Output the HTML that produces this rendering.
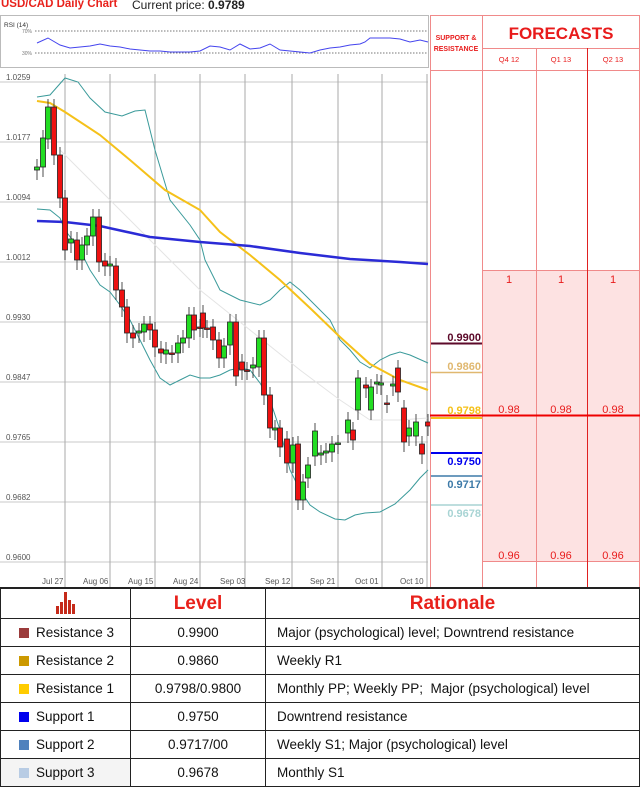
<!DOCTYPE html>
<html><head><meta charset="utf-8"><style>
body{margin:0;width:640px;height:785px;background:#fff;font-family:"Liberation Sans",sans-serif;position:relative;overflow:hidden}
.t{position:absolute;white-space:nowrap}
table{position:absolute;left:0;top:588px;width:640px;border-collapse:collapse;font-size:13.5px;color:#111}
td{border:1px solid #222;padding:0;height:27px}
.sq{display:inline-block;width:10px;height:10px;margin:0 7px 0 18px;vertical-align:-1px}
</style></head><body>
<div class="t" style="left:1px;top:-2px;font-size:11.5px;color:#e8211b;font-weight:bold">USD/CAD Daily Chart</div>
<div class="t" style="left:132px;top:-2px;font-size:12px;color:#222">Current price: <b>0.9789</b></div>
<svg width="640" height="588" style="position:absolute;left:0;top:0">
<rect x="0.5" y="15.5" width="428" height="52" fill="#fff" stroke="#bbb"/>
<text x="4" y="27" font-size="6.5" fill="#333" font-family="Liberation Sans">RSI (14)</text>
<text x="22" y="33" font-size="5" fill="#777">70%</text><text x="22" y="55" font-size="5" fill="#777">30%</text>
<line x1="35" y1="31" x2="428" y2="31" stroke="#777" stroke-dasharray="1.5,1.5"/>
<line x1="35" y1="53" x2="428" y2="53" stroke="#777" stroke-dasharray="1.5,1.5"/>
<polyline fill="none" stroke="#4444ee" stroke-width="1" points="37,43 48,38 60,45 70,48 80,47 90,46 100,44 110,46 120,47 130,49 140,50 150,51 160,51 170,52 180,52 190,52 200,51 210,46 220,47 230,50 240,44 250,49 260,48 270,44 280,50 290,51 300,52 310,53 320,50 330,48 340,47 350,45 360,44 365,42 370,38 380,38 390,38 400,39 410,42 420,40 428,42"/>
<g stroke="#c8c8c8" stroke-width="1">
<line x1="0" y1="82" x2="428" y2="82"/><line x1="0" y1="142" x2="428" y2="142"/><line x1="0" y1="202" x2="428" y2="202"/><line x1="0" y1="262" x2="428" y2="262"/><line x1="0" y1="322" x2="428" y2="322"/><line x1="0" y1="382" x2="428" y2="382"/><line x1="0" y1="442" x2="428" y2="442"/><line x1="0" y1="502" x2="428" y2="502"/><line x1="0" y1="562" x2="428" y2="562"/>
</g>
<g stroke="#aaa" stroke-width="1">
<line x1="65" y1="74" x2="65" y2="588"/><line x1="110" y1="74" x2="110" y2="588"/><line x1="155" y1="74" x2="155" y2="588"/><line x1="200" y1="74" x2="200" y2="588"/><line x1="245" y1="74" x2="245" y2="588"/><line x1="292" y1="74" x2="292" y2="588"/><line x1="338" y1="74" x2="338" y2="588"/><line x1="382" y1="74" x2="382" y2="588"/><line x1="427" y1="74" x2="427" y2="588"/>
</g>
<g font-size="8" fill="#555" font-family="Liberation Sans">
<text x="6" y="80">1.0259</text><text x="6" y="140">1.0177</text><text x="6" y="200">1.0094</text><text x="6" y="260">1.0012</text><text x="6" y="320">0.9930</text><text x="6" y="380">0.9847</text><text x="6" y="440">0.9765</text><text x="6" y="500">0.9682</text><text x="6" y="560">0.9600</text>
<text x="42" y="584">Jul 27</text><text x="83" y="584">Aug 06</text><text x="128" y="584">Aug 15</text><text x="173" y="584">Aug 24</text><text x="220" y="584">Sep 03</text><text x="265" y="584">Sep 12</text><text x="310" y="584">Sep 21</text><text x="355" y="584">Oct 01</text><text x="400" y="584">Oct 10</text>
</g>
<polyline fill="none" stroke="#e4e4e4" stroke-width="1" points="60,150 80,170 110,200 150,240 200,290 250,330 300,370 340,400 370,420 400,420 428,418"/>
<polyline fill="none" stroke="#3a9a9a" stroke-width="1" points="37,97 50,95 65,78 78,82 90,98 105,112 122,116 135,111 145,110 155,150 170,200 190,225 200,240 205,260 220,290 240,300 260,305 270,300 280,290 290,282 300,290 310,300 330,320 340,340 350,350 360,362 370,368 380,360 390,355 400,352 410,355 428,363"/>
<polyline fill="none" stroke="#3a9a9a" stroke-width="1" points="37,209 50,210 60,218 65,230 80,250 90,270 100,285 110,292 120,305 130,320 140,340 150,360 160,378 170,385 180,380 190,375 200,378 210,378 220,375 230,370 240,368 250,370 260,383 270,400 280,430 290,470 300,490 310,505 320,512 335,519 345,520 355,515 365,513 380,512 395,504 410,490 420,478 428,470"/>
<polyline fill="none" stroke="#f5c11a" stroke-width="2" points="37,101 50,103 65,112 100,135 130,160 165,190 200,210 220,232 250,255 280,280 310,308 340,337 370,364 400,380 428,390"/>
<polyline fill="none" stroke="#2b2bd6" stroke-width="2.5" points="37,221 65,222 100,226 150,237 200,242 250,246 300,253 350,259 400,262 428,264"/>
<g id="c" stroke="#222" stroke-width="0.8"></g>
<rect x="483" y="270" width="157" height="291" fill="#fde2e2"/>
<g stroke="#f08a8a" stroke-width="1">
<line x1="430.5" y1="15" x2="430.5" y2="588"/><line x1="482.5" y1="15" x2="482.5" y2="588"/><line x1="536.5" y1="48" x2="536.5" y2="588"/><line x1="639.5" y1="15" x2="639.5" y2="588"/>
<line x1="430" y1="15.5" x2="640" y2="15.5"/><line x1="483" y1="48.5" x2="640" y2="48.5"/><line x1="430" y1="70.5" x2="640" y2="70.5"/><line x1="483" y1="270.5" x2="640" y2="270.5"/><line x1="483" y1="561.5" x2="640" y2="561.5"/>
</g>
<line x1="587.5" y1="48" x2="587.5" y2="588" stroke="#e02020"/>
<line x1="430" y1="415.5" x2="640" y2="415.5" stroke="#ee0000" stroke-width="2"/>
<g font-family="Liberation Sans" fill="#e81b1b">
<text x="561" y="39" font-size="17" font-weight="bold" text-anchor="middle">FORECASTS</text>
<text x="456" y="40" font-size="7" font-weight="bold" text-anchor="middle">SUPPORT &amp;</text>
<text x="456" y="51" font-size="7" font-weight="bold" text-anchor="middle">RESISTANCE</text>
<text x="509" y="62" font-size="7.5" text-anchor="middle">Q4 12</text><text x="561" y="62" font-size="7.5" text-anchor="middle">Q1 13</text><text x="613" y="62" font-size="7.5" text-anchor="middle">Q2 13</text>
<g font-size="11" text-anchor="middle"><text x="509" y="283">1</text><text x="561" y="283">1</text><text x="613" y="283">1</text>
<text x="509" y="413">0.98</text><text x="561" y="413">0.98</text><text x="613" y="413">0.98</text>
<text x="509" y="559">0.96</text><text x="561" y="559">0.96</text><text x="613" y="559">0.96</text></g>
</g>
<line x1="431" y1="343.5" x2="482" y2="343.5" stroke="#5c0a2a" stroke-width="2"/>
<line x1="431" y1="372.5" x2="482" y2="372.5" stroke="#e0b870" stroke-width="1.5"/>
<line x1="431" y1="418" x2="482" y2="418" stroke="#f5c11a" stroke-width="2"/>
<line x1="431" y1="453" x2="482" y2="453" stroke="#0000ee" stroke-width="2"/>
<line x1="431" y1="476" x2="482" y2="476" stroke="#3d7aa8" stroke-width="1.5"/>
<line x1="431" y1="505" x2="482" y2="505" stroke="#a8d4d4" stroke-width="1.5"/>
<g font-family="Liberation Sans" font-size="11" font-weight="bold" text-anchor="end">
<text x="481" y="341" fill="#5c0a2a">0.9900</text>
<text x="481" y="370" fill="#e0b870">0.9860</text>
<text x="481" y="414" fill="#f5c11a">0.9798</text>
<text x="481" y="465" fill="#0000ee">0.9750</text>
<text x="481" y="488" fill="#3d7aa8">0.9717</text>
<text x="481" y="517" fill="#a8d4d4">0.9678</text>
</g>
<line x1="0" y1="587.5" x2="640" y2="587.5" stroke="#222"/>
</svg>
<script>
var d=[[37,170,167],[43,167,138],[48,139,107],[54,107,155],[60,155,198],[65,198,250],[71,243,239],[77,240,260],[82,260,245],[87,245,236],[93,236,217],[99,217,262],[105,261,266],[110,266,264],[116,266,290],[122,290,307],[127,307,333],[133,333,338],[139,333,331],[144,332,324],[150,324,330],[155,330,347],[161,349,353],[166,354,350],[172,353,353],[178,353,343],[183,343,338],[189,338,315],[194,315,330],[200,327,327],[203,313,328],[207,328,328],[213,327,340],[219,340,358],[224,358,346],[230,345,322],[236,322,376],[242,362,370],[247,370,370],[253,368,365],[259,367,338],[264,338,395],[270,395,428],[275,430,428],[280,428,447],[287,439,463],[293,463,445],[298,444,500],[303,500,482],[308,478,465],[315,456,431],[321,455,453],[326,453,451],[332,452,444],[338,444,443],[348,433,420],[353,430,440],[358,410,378],[366,385,388],[371,410,387],[377,384,382],[381,385,383],[387,403,403],[393,386,384],[398,368,392],[404,408,442],[409,436,428],[416,436,422],[422,444,454],[428,422,426]];
var s='';d.forEach(function(c){var x=c[0],o=c[1],cl=c[2],t=Math.min(o,cl),b=Math.max(o,cl),h=Math.max(b-t,1.5);
s+='<line x1="'+x+'" y1="'+(t-8)+'" x2="'+x+'" y2="'+(b+10)+'"/>';
s+='<rect x="'+(x-2.5)+'" y="'+t+'" width="5" height="'+h+'" fill="'+(cl<o?'#22dd22':'#ee1111')+'"/>';});
document.getElementById('c').innerHTML=s;
</script>
<table>
<tr style="height:30px"><td style="width:129px;text-align:center"><svg width="24" height="24" viewBox="0 0 24 24"><rect x="2" y="16" width="3" height="8" fill="#c52a1a"/><rect x="6" y="12" width="3" height="12" fill="#c52a1a"/><rect x="10" y="2" width="3" height="22" fill="#c52a1a"/><rect x="14" y="10" width="3" height="14" fill="#c52a1a"/><rect x="18" y="14" width="3" height="10" fill="#c52a1a"/></svg></td>
<td style="width:134px;text-align:center;color:#e8211b;font-weight:bold;font-size:19px">Level</td>
<td style="text-align:center;color:#e8211b;font-weight:bold;font-size:19px">Rationale</td></tr>
<tr><td><span class="sq" style="background:#9b3b3b"></span>Resistance 3</td><td style="text-align:center">0.9900</td><td style="padding-left:11px">Major (psychological) level; Downtrend resistance</td></tr>
<tr><td><span class="sq" style="background:#cc9900"></span>Resistance 2</td><td style="text-align:center">0.9860</td><td style="padding-left:11px">Weekly R1</td></tr>
<tr><td><span class="sq" style="background:#ffcc00"></span>Resistance 1</td><td style="text-align:center">0.9798/0.9800</td><td style="padding-left:11px">Monthly PP; Weekly PP;&nbsp; Major (psychological) level</td></tr>
<tr><td><span class="sq" style="background:#0000ee"></span>Support 1</td><td style="text-align:center">0.9750</td><td style="padding-left:11px">Downtrend resistance</td></tr>
<tr><td><span class="sq" style="background:#4f81bd"></span>Support 2</td><td style="text-align:center">0.9717/00</td><td style="padding-left:11px">Weekly S1; Major (psychological) level</td></tr>
<tr><td style="background:#f4f4f4"><span class="sq" style="background:#b8cce4"></span>Support 3</td><td style="text-align:center">0.9678</td><td style="padding-left:11px">Monthly S1</td></tr>
</table>
</body></html>
